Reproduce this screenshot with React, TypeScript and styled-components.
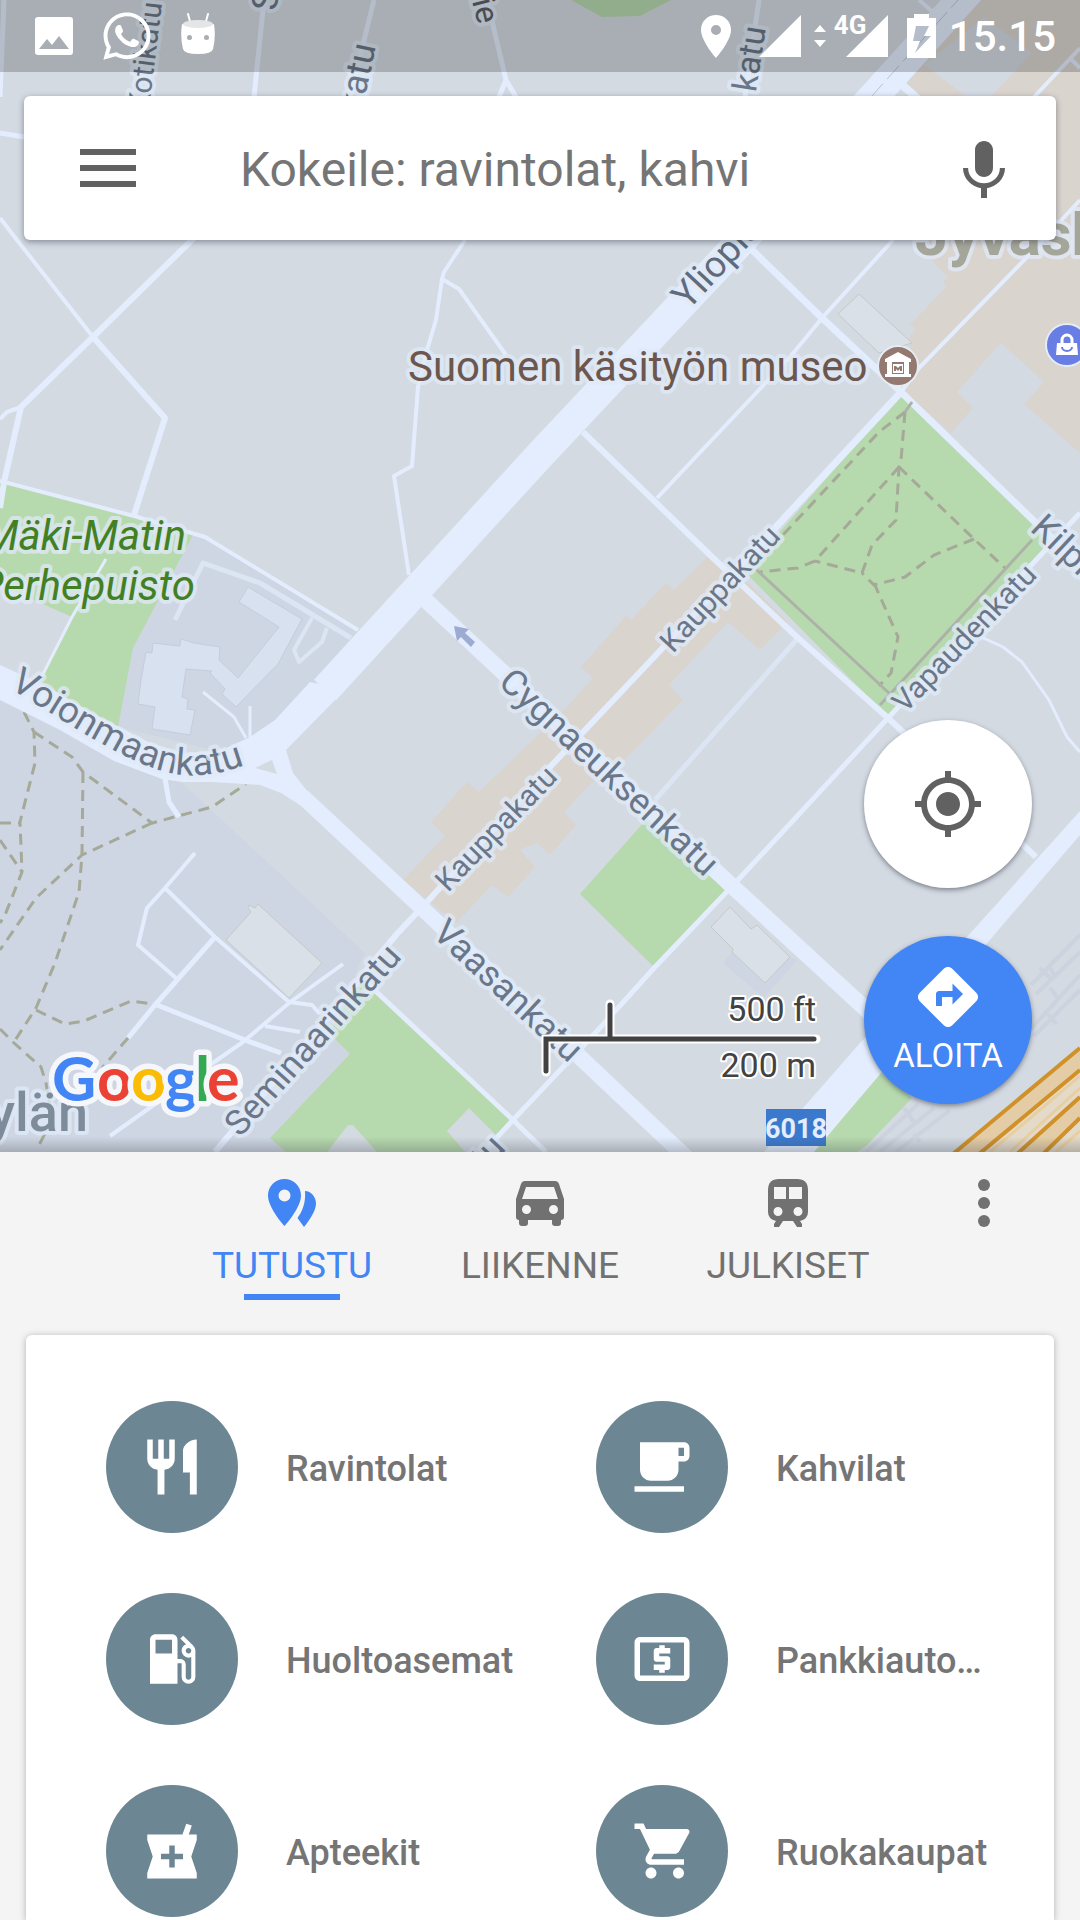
import React from "react";
import styled, { createGlobalStyle, css } from "styled-components";
import {
  MdDirections,
  MdLocalAtm,
  MdLocalGasStation,
  MdMyLocation,
} from "react-icons/md";
import { FaWhatsapp } from "react-icons/fa";

const color = {
  land: "#d3dae2",
  campus: "#ced6e3",
  road: "#e3edfd",
  lane: "#dbe5f4",
  park: "#b7d9ae",
  shops: "#d9d4ce",
  path: "#a5a998",
  label: "#6b7788",
  blue: "#4285f4",
  slate: "#6c8694",
  icon: "#616161",
  tab: "#717171",
  text: "#757575",
};

const GlobalStyle = createGlobalStyle`
  * { box-sizing: border-box; }
  body { margin: 0; background: #f4f4f4; }
  body, button, input { font-family: Roboto, "Noto Sans", sans-serif; }
  button { border: 0; padding: 0; background: none; color: inherit; cursor: pointer; }
  svg { display: block; flex: none; }
`;

const Page = styled.div`
  display: flex;
  flex-direction: column;
  height: 100vh;
  overflow: hidden;
`;

/* ---------- map ---------- */

const MapSection = styled.section`
  position: relative;
  flex: 0 0 60vh;
  overflow: hidden;
  background: ${color.land};
`;

const MapCanvas = styled.svg`
  position: absolute;
  inset: 0;
  width: 100%;
  height: 100%;
`;

const MapOverlay = styled.div`
  position: relative;
  display: flex;
  flex-direction: column;
  height: 100%;
  background: linear-gradient(to top, rgba(60, 64, 72, 0.28), rgba(60, 64, 72, 0) 15px);
`;

const Road = styled.path<{ $w?: number; $lane?: boolean }>`
  fill: none;
  stroke: ${(p) => (p.$lane ? color.lane : color.road)};
  stroke-width: ${(p) => p.$w ?? 4};
  stroke-linejoin: round;
`;

const Footpath = styled.path<{ $solid?: boolean }>`
  fill: none;
  stroke: ${(p) => (p.$solid ? "#adb2a9" : color.path)};
  stroke-width: 3;
  ${(p) => !p.$solid && css`stroke-dasharray: 11 7;`}
`;

const Building = styled.path`
  fill: #dae0e7;
  stroke: #c6c9c8;
  stroke-width: 1;
`;

const MapLabel = styled.text<{ $size: number; $fill?: string; $weight?: number; $italic?: boolean }>`
  font-family: Roboto, "Noto Sans", sans-serif;
  font-size: ${(p) => p.$size}px;
  font-weight: ${(p) => p.$weight ?? 400};
  font-style: ${(p) => (p.$italic ? "italic" : "normal")};
  fill: ${(p) => p.$fill ?? color.label};
  stroke: rgba(224, 234, 248, 0.75);
  stroke-width: 8;
  stroke-linejoin: round;
  paint-order: stroke;
`;

function CityMap() {
  return (
    <MapCanvas viewBox="0 0 1080 1152" preserveAspectRatio="xMidYMid slice" aria-label="Kartta">
      {/* districts */}
      <g fill={color.campus}>
        <path d="M194 533L205 537L358 632L255 760L118 727L133 648Z" />
        <path d="M0 690L181 782L365 953L329 1033L350 1054L270 1138L286 1152H0Z" />
        <path d="M732 952L723 963L764 998L797 960L790 957L765 983Z" />
      </g>
      <g fill={color.park}>
        <path d="M0 482L134 516L194 533L133 648L118 727L52 690L40 680L72 617L0 585Z" />
        <path d="M901 393L1036 523L1046 550L888 717L745 572Z" />
        <path d="M646 820L726 889L654 967L580 894Z" />
        <path d="M360 977L510 1120L496 1135L469 1108L447 1131L465 1152H377L353 1125H348L327 1152H286L270 1138L350 1054L329 1033Z" />
        <path d="M881 1073L912 1098L867 1145L857 1152H812L827 1135Z" />
        <path d="M571 0L602 17L640 16L671 0Z" />
      </g>
      <g fill={color.shops}>
        <path d="M709 555L674 590L666 583L631 620L626 616L581 667L593 678L562 712L540 733L515 757L479 792L467 782L431 822L445 836L403 880L456 923L492 885L508 897L535 867L520 850L526 847L537 843L550 855L576 825L564 812L587 787L600 776L618 766L683 700L669 685L728 622L760 650L788 622L747 582Z" />
        <path d="M1080 0H981L905 85L912 240L948 277L943 282L946 287L910 325L916 330L907 340L919 368L902 390L951 433L973 408L957 392L1001 343L1044 382L1024 404L1080 453Z" />
      </g>
      <path d="M984 17L1032 53L990 97H967L924 65Z" fill={color.land} />

      {/* rail yard */}
      <g stroke="#cbd1dd" strokeWidth="4" fill="none" opacity="0.8">
        <path d="M1080 935L1031 985M1080 952L1036 994M1080 975L1030 1030M1080 990L1034 1036M1040 968L1050 978M1050 968L1056 978M1050 988L1058 998M1048 1014L1056 1024" />
        <path d="M918 1104L866 1152M934 1108L880 1152M950 1110L896 1152M904 1108L914 1122M914 1134L920 1142" />
      </g>
      <path d="M1080 1048L953 1152H1080Z" fill="#e4dac9" />
      <path d="M1080 1048L953 1152H979L1080 1070Z" fill="#e4cda6" />
      <path d="M1080 1097L1017 1152H1043L1080 1118Z" fill="#e4cda6" />
      <path d="M1080 1076L990 1152M1080 1088L1010 1152M1080 1131L1056 1152" stroke="#e8cfa2" strokeWidth="3" />
      <path d="M1080 1048L953 1154M1080 1070L979 1154M1080 1097L1017 1154M1080 1118L1043 1154" stroke="#cf9128" strokeWidth="4" />

      {/* buildings */}
      <path
        d="M248 587L302 619L278 664L236 707L222 694L225 689L210 673L212 671L186 669L182 697L188 699L187 709L195 710L190 735L152 729L155 707L138 704L141 680L146 652L152 653L153 643L180 646L181 639L194 643L220 647L219 660L238 678L279 627L239 602Z"
        fill="#d7e1ef"
        stroke="#c3cddc"
      />
      <Building d="M859 294L838 314L879 353L912 343Z" />
      <Building d="M730 907L751 929L757 925L790 957L765 983L732 952L733 949L711 927Z" />
      <Building d="M258 904L322 963L289 998L226 940L251 912L248 908L249 905L255 908Z" />

      {/* service lanes */}
      <Road $lane $w={5} d="M351 638L260 583L203 563L175 620" />
      <Road $lane $w={4} d="M312 618L294 650L299 662L322 642L327 628" />
      <Road $lane $w={5} d="M798 638L745 698L655 800" />

      {/* minor streets */}
      <Road d="M0 218L17 240L93 337" />
      <Road $w={6} d="M93 337L165 418L134 515" />
      <Road $w={6} d="M198 234L93 337L21 407L4 482L0 508" />
      <Road d="M21 407L7 412L0 419" />
      <Road d="M0 481L134 516L205 537L358 630" />
      <Road $w={3} d="M106 559L72 617L40 680" />
      <Road $w={3} d="M203 692L234 717L246 738M250 706L250 737" />
      <Road $w={5} d="M4 0L0 97M0 133L24 137M264 0L254 97M374 0L350 97" />
      <Road $w={5} d="M487 0L506 80L499 97M506 80L516 97M759 0L745 97" />
      <Road d="M465 240L444 272L442 279L436 320L427 350L418 387L412 466L394 476L409 575M442 279L459 289L506 355" />
      <Road d="M657 498L790 357L822 318L893 240" />
      <Road $w={7} d="M745 243L822 318L901 392L1036 523L1080 564" />
      <Road $w={6} d="M583 432L710 555L798 638L888 718L1036 857" />
      <Road d="M901 392L919 368L1029 255L1080 200M1080 48L1034 97M1070 58L1080 68M919 0L934 13" />
      <Road $w={8} d="M900 83L918 99" />
      <Road $w={7} d="M901 392L738 568" />
      <Road $w={6} d="M738 568L623 690L550 767L427 902L396 935L215 1152" />
      <Road $w={5} d="M1080 513L1036 560L888 718L738 880L655 967L598 1030L513 1120L480 1156" />
      <Road $w={5} d="M367 983L513 1120L546 1152" />
      <Road $w={3} d="M981 637L1003 647L1022 662L1049 700L1067 737L1080 752" />
      <Road $w={5} d="M165 778L169 802L179 817" />
      <Road $w={4} d="M195 853L165 888L147 908L138 945L176 978M165 888L215 937L289 1002L312 1005L320 1014" />
      <Road $w={5} d="M215 937L155 1005L128 1038M157 1005L245 1040L281 1053" />
      <Road $w={4} d="M343 964L289 1003L243 1042L207 1067L110 1136M265 1026L300 1032" />

      {/* footpaths */}
      <Footpath d="M24 712L34 732L35 763L20 822L22 872L5 915L0 923" />
      <Footpath d="M0 840L22 872M0 823H20" />
      <Footpath d="M34 732L72 757L83 772L152 823L212 807L246 784" />
      <Footpath d="M83 772L82 855L79 892L55 963L36 1008L14 1042" />
      <Footpath d="M152 823L82 855L36 898L0 950" />
      <Footpath d="M36 1010L65 1024L84 1021L131 1001L153 1004" />
      <Footpath d="M0 1029L14 1043L41 1067L46 1083L52 1120L38 1147M128 1038L102 1068" />
      <Footpath d="M905 412L901 460L899 467L896 520L872 545L862 573L815 561" />
      <Footpath d="M905 412L879 432L781 537" />
      <Footpath d="M899 467L815 561L798 568L760 572" />
      <Footpath d="M899 467L974 539L1005 568M974 539L934 555L905 577L874 585L862 573" />
      <Footpath d="M874 583L898 637L891 673L879 686" />
      <Footpath $solid d="M912 402L905 412M748 562L759 572L890 694M1032 540L880 705" />

      {/* main streets */}
      <Road $w={30} d="M325 690L540 455L744 238L875 95L970 -10" />
      <path d="M871 97L958 0" stroke="#bcc4d2" strokeWidth="1" strokeDasharray="18 6" />
      <Road $w={16} d="M418 593L732 886L895 1036" />
      <Road $w={16} d="M302 796L422 908L690 1161" />
      <path
        d="M0 665L48 687L90 712L148 742L182 753L220 751L250 737L275 720L310 682L345 690L286 750L293 773L312 797L308 811L303 807L281 793L260 785L213 782H182L162 779L114 761L60 730L0 700Z"
        fill={color.road}
      />
      <path d="M272 760L277 774L255 768Z" fill={color.land} />
      <path d="M1080 811L967 937L860 1043L803 1108L764 1152H814L881 1073L988 942L1080 835Z" fill={color.road} />
      <path d="M454 626L469 629L465 633L475 642L471 647L461 637L457 641Z" fill="#9dabd2" />

      {/* street names */}
      <path id="voionmaankatu" d="M9 688C50 712 80 733 117 752C150 769 175 777 200 775C220 774 240 768 262 757" fill="none" />
      <MapLabel $size={37}>
        <textPath href="#voionmaankatu">Voionmaankatu</textPath>
      </MapLabel>
      <MapLabel $size={36} transform="translate(497 684) rotate(43)">Cygnaeuksenkatu</MapLabel>
      <MapLabel $size={36} transform="translate(431 935) rotate(43)">Vaasankatu</MapLabel>
      <MapLabel $size={30} transform="translate(448 893) rotate(-46)">Kauppakatu</MapLabel>
      <MapLabel $size={30} transform="translate(673 654) rotate(-47)">Kauppakatu</MapLabel>
      <MapLabel $size={30} transform="translate(905 714) rotate(-46)">Vapaudenkatu</MapLabel>
      <MapLabel $size={35} transform="translate(240 1138) rotate(-48)">Seminaarinkatu</MapLabel>
      <MapLabel $size={37} $fill="#5f6b7c" transform="translate(688 311) rotate(-47)">Yliopistonkatu</MapLabel>
      <MapLabel $size={36} transform="translate(1029 530) rotate(43)">Kilpisenkatu</MapLabel>
      <MapLabel $size={34} textAnchor="end" transform="translate(766 28) rotate(-81)">katu</MapLabel>
      <MapLabel $size={30} textAnchor="end" transform="translate(162 3) rotate(-83)">Kotikatu</MapLabel>
      <MapLabel $size={36} textAnchor="end" transform="translate(376 46) rotate(-78)">katu</MapLabel>
      <MapLabel $size={36} transform="translate(277 11) rotate(-86)">S</MapLabel>
      <MapLabel $size={32} $fill="#5c6166" textAnchor="end" transform="translate(478 25) rotate(76)">tie</MapLabel>
      <MapLabel $size={36} textAnchor="end" transform="translate(507 1149) rotate(-47)">katu</MapLabel>

      {/* places */}
      <MapLabel $size={42} $fill="#6d564e" x="408" y="381">Suomen käsityön museo</MapLabel>
      <MapLabel $size={42} $fill="#438024" $italic textAnchor="end" x="186" y="550">Mäki-Matin</MapLabel>
      <MapLabel $size={42} $fill="#438024" $italic textAnchor="end" x="195" y="600">Perhepuisto</MapLabel>
      <MapLabel $size={60} $fill="#a5a69a" $weight={700} x="915" y="255">Jyväskylä</MapLabel>
      <MapLabel $size={54} $fill="#7d8b9b" $weight={500} textAnchor="end" x="88" y="1131">ylän</MapLabel>
      <circle cx="898" cy="366" r="20" fill="#93796f" stroke="#e6ecf6" strokeWidth="2" />
      <path d="M898 352L911 359V362H885V359ZM887 362H892V374H904V362H909V374H887ZM885 374H911V377H885Z" fill="#fff" />
      <path d="M893 364H903V373H893ZM894 371V366H896L898 368L900 366H902V371H900V369L898 371L896 369V371Z" fill="#fff" fillRule="evenodd" />
      <circle cx="1067" cy="345" r="21" fill="#687ee4" stroke="#e6ecf6" strokeWidth="2" />
      <path d="M1057 343H1077L1078 355H1056Z" fill="#fff" />
      <path d="M1062 344V340A5 5 0 0 1 1072 340V344" fill="none" stroke="#fff" strokeWidth="3" />
      <path d="M1062 347A5 4 0 0 0 1072 347" fill="none" stroke="#687ee4" strokeWidth="2" />
      <rect x="766" y="1109" width="60" height="37" fill="#3b79cc" />
      <text x="796" y="1138" textAnchor="middle" fontFamily="Roboto, sans-serif" fontSize="27" fontWeight="700" fill="#e3edfd">
        6018
      </text>
    </MapCanvas>
  );
}

/* ---------- status bar ---------- */

const StatusBar = styled.div`
  display: flex;
  align-items: center;
  justify-content: space-between;
  height: 72px;
  padding: 0 24px 0 35px;
  background: rgba(0, 0, 0, 0.2);
  color: #fff;
`;

const StatusGroup = styled.div<{ $gap: number }>`
  display: flex;
  align-items: center;
  gap: ${(p) => p.$gap}px;
`;

const MobileData = styled.div`
  position: relative;
  padding-left: 12px;
`;

const Network = styled.span`
  position: absolute;
  top: 0;
  left: 0;
  font-size: 26px;
  line-height: 20px;
  font-weight: 700;
`;

const Clock = styled.time`
  padding-top: 2px;
  font-size: 42px;
  line-height: 48px;
  font-weight: 500;
`;

function SignalIcon() {
  return (
    <svg width="42" height="42" viewBox="0 0 42 42" fill="#fff">
      <path d="M42 0V42H0Z" />
    </svg>
  );
}

function PhoneStatus() {
  return (
    <StatusBar>
      <StatusGroup $gap={30}>
        <svg width="38" height="38" viewBox="0 0 38 38" fill="#fff">
          <path fillRule="evenodd" d="M3 0H35Q38 0 38 3V35Q38 38 35 38H3Q0 38 0 35V3Q0 0 3 0ZM4 32H34L24 19L17 28L12 22Z" />
        </svg>
        <FaWhatsapp size={54} style={{ width: 48 }} />
        <svg width="34" height="46" viewBox="0 0 34 46" fill="#fff">
          <path d="M7 1L10 12M27 1L24 12" stroke="#fff" strokeWidth="2" strokeLinecap="round" />
          <path
            fillRule="evenodd"
            d="M1 11Q17 15 33 11Q35 24 32 36Q31 41 17 41Q3 41 2 36Q-1 24 1 11ZM8.500 22A2.500 2.500 0 1 0 8.500 27A2.500 2.500 0 1 0 8.500 22ZM25.500 22A2.500 2.500 0 1 0 25.500 27A2.500 2.500 0 1 0 25.500 22Z"
          />
          <ellipse cx="17" cy="11" rx="15" ry="4" fill="#e4e5e7" />
        </svg>
      </StatusGroup>
      <StatusGroup $gap={13}>
        <StatusGroup $gap={19}>
          <StatusGroup $gap={28}>
            <svg width="30" height="43" viewBox="0 0 30 43" fill="#fff">
              <path fillRule="evenodd" d="M15 0C7 0 0 6 0 15C0 26 15 43 15 43S30 26 30 15C30 6 23 0 15 0ZM15 10A5 5 0 1 1 15 20A5 5 0 1 1 15 10Z" />
            </svg>
            <StatusGroup $gap={8}>
              <StatusGroup $gap={13}>
                <SignalIcon />
                <svg width="12" height="22" viewBox="0 0 12 22" fill="#fff">
                  <path d="M6 0L12 7H0ZM0 15H12L6 22Z" />
                </svg>
              </StatusGroup>
              <MobileData>
                <SignalIcon />
                <Network>4G</Network>
              </MobileData>
            </StatusGroup>
          </StatusGroup>
          <svg width="29" height="44" viewBox="0 0 29 44" fill="#fff">
            <path fillRule="evenodd" d="M7 0H22V4H29V44H0V4H7ZM9 12L6 27H13L8 39L24 22H17L22 12Z" />
          </svg>
        </StatusGroup>
        <Clock>15.15</Clock>
      </StatusGroup>
    </StatusBar>
  );
}

/* ---------- search and map controls ---------- */

const SearchForm = styled.form`
  display: flex;
  align-items: center;
  height: 144px;
  margin: 24px 24px 0;
  padding: 0 36px 0 48px;
  border-radius: 6px;
  background: #fff;
  box-shadow: 0 2px 6px rgba(40, 44, 56, 0.45);
  color: ${color.icon};
`;

const SearchInput = styled.input`
  flex: 1;
  min-width: 0;
  height: 96px;
  margin: 0 24px 0 96px;
  padding: 3px 0 0;
  border: 0;
  outline: 0;
  background: none;
  color: ${color.text};
  font-size: 48px;
  &::placeholder {
    color: ${color.text};
    opacity: 1;
  }
`;

const IconButton = styled.button`
  display: flex;
  align-items: center;
  justify-content: center;
  width: 72px;
  height: 72px;
`;

const MapFooter = styled.div`
  display: flex;
  align-items: flex-end;
  margin-top: auto;
  padding: 0 48px 24px;
`;

const ScaleBar = styled.svg`
  margin: 0 48px 36px auto;
  overflow: visible;
  font-family: Roboto, sans-serif;
  font-size: 34px;
  fill: #424242;
`;

const FabColumn = styled.div`
  display: flex;
  flex-direction: column;
  gap: 48px;
  margin-bottom: 24px;
`;

const Fab = styled.button<{ $primary?: boolean }>`
  display: flex;
  flex-direction: column;
  align-items: center;
  justify-content: center;
  width: 168px;
  height: 168px;
  border-radius: 50%;
  background: ${(p) => (p.$primary ? color.blue : "#fff")};
  color: ${(p) => (p.$primary ? "#fff" : color.icon)};
  box-shadow: 0 2px 5px rgba(40, 44, 56, 0.5);
  font-size: 33px;
  line-height: 46px;
`;

const Wordmark = styled.text`
  font-family: Lato, sans-serif;
  font-size: 61px;
  font-weight: 700;
`;

const wordmark: [string, number, string][] = [
  ["G", 4, "#4285f4"],
  ["o", 49, "#ea4335"],
  ["o", 83, "#fbbc05"],
  ["g", 117, "#4285f4"],
  ["l", 147, "#34a853"],
  ["e", 159, "#ea4335"],
];

function GoogleLogo() {
  return (
    <svg width="200" height="84" viewBox="0 0 200 84" overflow="visible" role="img" aria-label="Google">
      <Wordmark y="57" stroke="#f5f7fa" strokeWidth="11" strokeLinejoin="round" paintOrder="stroke">
        {wordmark.map(([letter, x, fill]) => (
          <tspan key={x} x={x} fill={fill}>{letter}</tspan>
        ))}
      </Wordmark>
    </svg>
  );
}

function MapControls() {
  return (
    <MapFooter>
      <GoogleLogo />
      <ScaleBar width="276" height="96" viewBox="0 0 276 96">
        <g fill="none" strokeLinecap="round">
          <path d="M6 76V43H276M70 8V43" stroke="#fff" strokeWidth="9" />
          <path d="M6 75V43H274M70 9V43" stroke="#424242" strokeWidth="5" />
        </g>
        <g textAnchor="end" stroke="#fff" strokeWidth="4" paintOrder="stroke" strokeLinejoin="round">
          <text x="276" y="25">500 ft</text>
          <text x="276" y="81">200 m</text>
        </g>
      </ScaleBar>
      <FabColumn>
        <Fab type="button" aria-label="Oma sijainti">
          <MdMyLocation size={72} />
        </Fab>
        <Fab type="button" $primary>
          <MdDirections size={72} />
          ALOITA
        </Fab>
      </FabColumn>
    </MapFooter>
  );
}

/* ---------- bottom sheet ---------- */

const Sheet = styled.main`
  display: flex;
  flex: 1;
  flex-direction: column;
  min-height: 0;
  background: #f4f4f4;
`;

const TabBar = styled.nav`
  display: grid;
  grid-template-columns: 1fr repeat(3, 248px) 1fr;
  height: 183px;
  flex: none;
  color: ${color.tab};
`;

const Tab = styled.button<{ $active?: boolean }>`
  display: flex;
  flex-direction: column;
  align-items: center;
  padding-top: 27px;
  color: ${(p) => (p.$active ? color.blue : color.tab)};
  font-size: 37px;
  line-height: 56px;
  &::after {
    content: "";
    width: 96px;
    height: 6px;
    background: ${(p) => (p.$active ? color.blue : "transparent")};
  }
`;

const TabLabel = styled.span`
  margin-top: 11px;
`;

const MoreButton = styled(IconButton)`
  justify-self: end;
  margin: 15px 60px 0 0;
`;

const Card = styled.section`
  display: grid;
  grid-template-columns: 1fr 1fr;
  grid-auto-rows: 132px;
  gap: 60px 80px;
  flex: 1;
  margin: 0 26px;
  padding: 66px 48px 0 80px;
  border-radius: 6px 6px 0 0;
  background: #fff;
  box-shadow: 0 1px 7px rgba(0, 0, 0, 0.28);
`;

const Category = styled.button`
  display: flex;
  align-items: center;
  gap: 48px;
  color: ${color.text};
  font-size: 36px;
  font-weight: 500;
  text-align: left;
  white-space: nowrap;
`;

const CategoryName = styled.span`
  padding-top: 4px;
`;

const Disc = styled.span`
  display: flex;
  flex: none;
  align-items: center;
  justify-content: center;
  width: 132px;
  height: 132px;
  border-radius: 50%;
  background: ${color.slate};
  color: #fff;
`;

const MicIcon = () => (
  <svg width="72" height="72" viewBox="0 -1 24 24" fill="currentColor">
    <path d="M12 14c1.660 0 2.990-1.340 2.990-3L15 5c0-1.660-1.340-3-3-3S9 3.340 9 5v6c0 1.660 1.340 3 3 3zm5.300-3c0 3-2.540 5.100-5.300 5.100S6.700 14 6.700 11H5c0 3.410 2.720 6.230 6 6.720V21h2v-3.280c3.280-.480 6-3.300 6-6.720h-1.700z" />
  </svg>
);

const ExploreIcon = () => (
  <svg width="48" height="48" viewBox="0 0 48 48" fill="currentColor">
    <path fillRule="evenodd" d="M16.500 0C7.400 0 0 7.400 0 16.500C0 29 16.500 47 16.500 47S33 29 33 16.500C33 7.400 25.600 0 16.500 0ZM16.500 10.500A6 6 0 1 1 16.500 22.500A6 6 0 1 1 16.500 10.500Z" />
    <path d="M37 12C43 12 48 18 48 24.500C48 34 36 48 36 48L29.500 39C34 33 38 24 37 12Z" />
  </svg>
);

const CarIcon = () => (
  <svg width="48" height="48" viewBox="0 0 48 48" fill="currentColor">
    <path
      fillRule="evenodd"
      d="M9 2H39Q42 2 43 5L48 20V38Q48 41 45 41V44Q45 47 42 47H39Q36 47 36 44V41H12V44Q12 47 9 47H6Q3 47 3 44V41Q0 41 0 38V20L5 5Q6 2 9 2ZM10 8L6 20H42L38 8ZM10.500 26A4.500 4.500 0 1 0 10.500 35A4.500 4.500 0 1 0 10.500 26ZM37.500 26A4.500 4.500 0 1 0 37.500 35A4.500 4.500 0 1 0 37.500 26Z"
    />
  </svg>
);

const TrainIcon = () => (
  <svg width="48" height="48" viewBox="0 0 48 48" fill="currentColor">
    <path
      fillRule="evenodd"
      d="M15 0H33Q44 0 44 11V33Q44 40 36 42L38 45V48H33L29 42H19L15 48H10V45L12 42Q4 40 4 33V11Q4 0 15 0ZM10 8V20H22V8ZM25 8V20H38V8ZM14 28A4.500 4.500 0 1 0 14 37A4.500 4.500 0 1 0 14 28ZM34 28A4.500 4.500 0 1 0 34 37A4.500 4.500 0 1 0 34 28Z"
    />
  </svg>
);

const RestaurantIcon = () => (
  <svg width="66" height="66" viewBox="0 0 24 24" fill="currentColor">
    <path d="M11 9H9V2H7v7H5V2H3v7c0 2.120 1.660 3.840 3.750 3.970V22h2.500v-9.030C11.340 12.840 13 11.120 13 9V2h-2v7zm5-3v8h2.500v8H21V2c-2.760 0-5 2.240-5 4z" />
  </svg>
);

const CafeIcon = () => (
  <svg width="66" height="66" viewBox="0 0 24 24" fill="currentColor">
    <path d="M20 3H4v10c0 2.210 1.790 4 4 4h6c2.210 0 4-1.790 4-4v-3h2c1.110 0 2-.9 2-2V5c0-1.110-.890-2-2-2zm0 5h-2V5h2v3zM2 21h18v-2H2v2z" />
  </svg>
);

const PharmacyIcon = () => (
  <svg width="66" height="66" viewBox="0 0 24 24" fill="currentColor">
    <path fillRule="evenodd" d="M21 6h-2.900l1.100-3.300-2-.6L15.800 6H3v2l2 6-2 6v2h18v-2l-2-6 2-6V6zM16 15h-3v3h-2v-3H8v-2h3v-3h2v3h3v2z" />
  </svg>
);

const CartIcon = () => (
  <svg width="66" height="66" viewBox="-1 0 24 24" fill="currentColor">
    <path d="M7 18c-1.100 0-1.990.9-1.990 2S5.900 22 7 22s2-.9 2-2-.9-2-2-2zM1 2v2h2l3.600 7.590-1.350 2.450c-.160.280-.250.610-.250.960 0 1.100.9 2 2 2h12v-2H7.420c-.140 0-.250-.110-.250-.250l.030-.120.9-1.630h7.450c.750 0 1.410-.410 1.750-1.030l3.580-6.490c.080-.140.120-.310.120-.480 0-.550-.450-1-1-1H5.210l-.940-2H1zm16 16c-1.100 0-1.990.9-1.990 2s.890 2 1.990 2 2-.9 2-2-.9-2-2-2z" />
  </svg>
);

const categories = [
  { name: "Ravintolat", icon: <RestaurantIcon /> },
  { name: "Kahvilat", icon: <CafeIcon /> },
  { name: "Huoltoasemat", icon: <MdLocalGasStation size={66} /> },
  { name: "Pankkiauto…", icon: <MdLocalAtm size={66} /> },
  { name: "Apteekit", icon: <PharmacyIcon /> },
  { name: "Ruokakaupat", icon: <CartIcon /> },
];

export default function App() {
  return (
    <Page>
      <GlobalStyle />
      <MapSection>
        <CityMap />
        <MapOverlay>
          <PhoneStatus />
          <SearchForm role="search" onSubmit={(e) => e.preventDefault()}>
            <IconButton type="button" aria-label="Valikko">
              <svg width="56" height="38" viewBox="0 0 56 38" fill="currentColor">
                <path d="M0 0H56V6H0ZM0 16H56V22H0ZM0 32H56V38H0Z" />
              </svg>
            </IconButton>
            <SearchInput aria-label="Haku" placeholder="Kokeile: ravintolat, kahvi" />
            <IconButton type="button" aria-label="Puhehaku">
              <MicIcon />
            </IconButton>
          </SearchForm>
          <MapControls />
        </MapOverlay>
      </MapSection>
      <Sheet>
        <TabBar>
          <span />
          <Tab type="button" $active>
            <ExploreIcon />
            <TabLabel>TUTUSTU</TabLabel>
          </Tab>
          <Tab type="button">
            <CarIcon />
            <TabLabel>LIIKENNE</TabLabel>
          </Tab>
          <Tab type="button">
            <TrainIcon />
            <TabLabel>JULKISET</TabLabel>
          </Tab>
          <MoreButton type="button" aria-label="Lisää">
            <svg width="12" height="48" viewBox="0 0 12 48" fill="currentColor">
              <circle cx="6" cy="6" r="6" />
              <circle cx="6" cy="24" r="6" />
              <circle cx="6" cy="42" r="6" />
            </svg>
          </MoreButton>
        </TabBar>
        <Card>
          {categories.map(({ name, icon }) => (
            <Category key={name} type="button">
              <Disc>{icon}</Disc>
              <CategoryName>{name}</CategoryName>
            </Category>
          ))}
        </Card>
      </Sheet>
    </Page>
  );
}
